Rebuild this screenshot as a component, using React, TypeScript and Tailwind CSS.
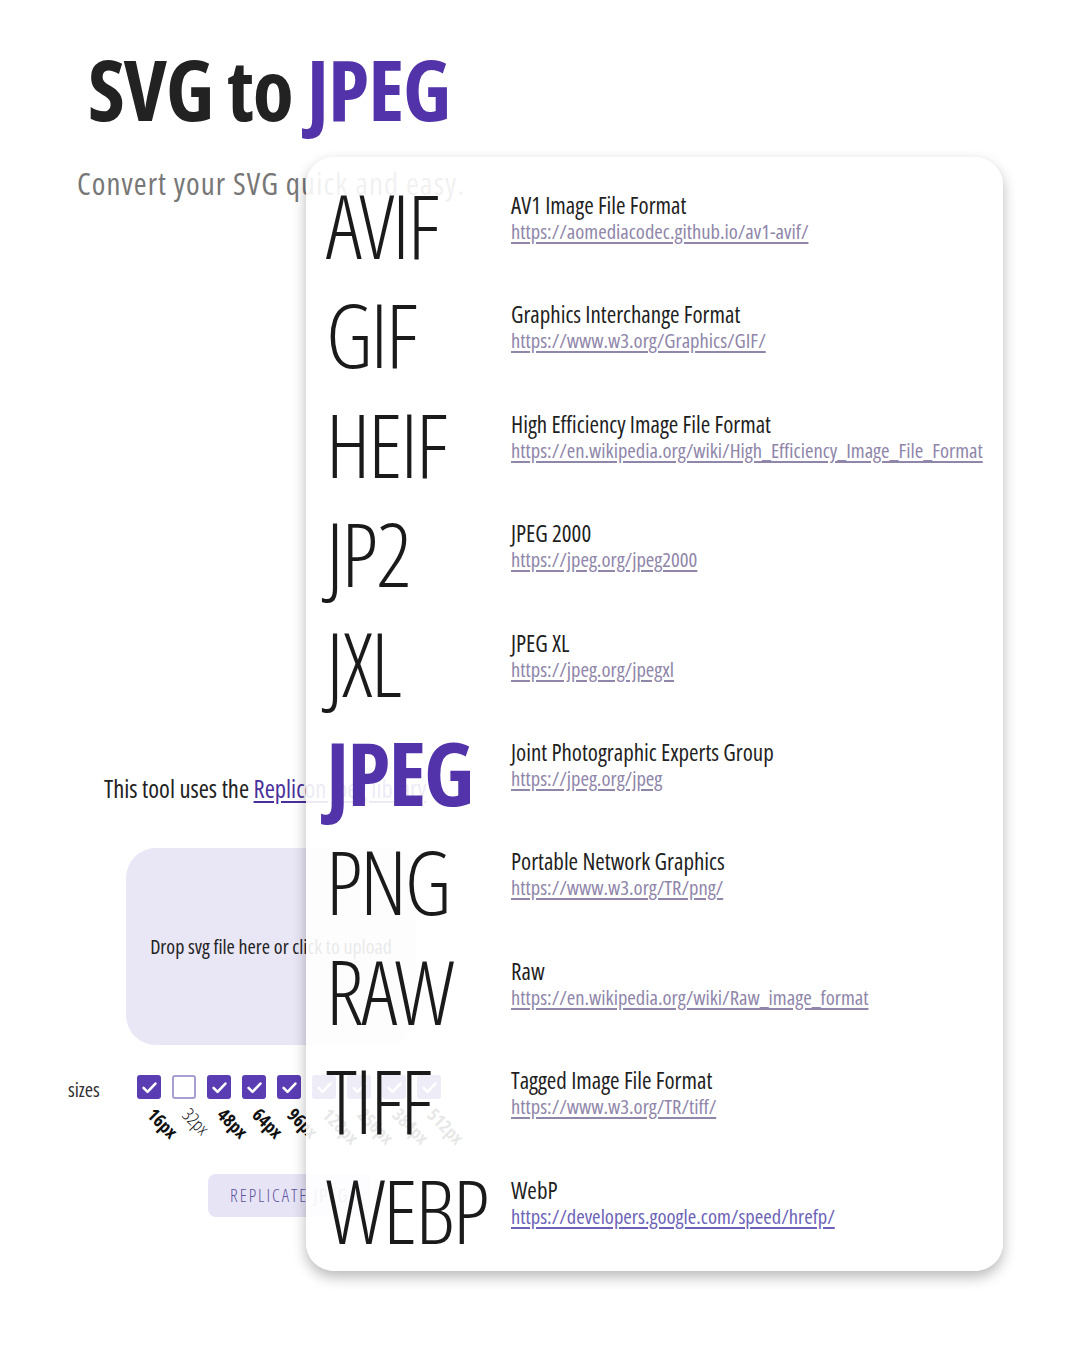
import React from 'react'

const formats = [
  { key: 'AVIF', name: 'AV1 Image File Format', url: 'https://aomediacodec.github.io/av1-avif/' },
  { key: 'GIF', name: 'Graphics Interchange Format', url: 'https://www.w3.org/Graphics/GIF/' },
  { key: 'HEIF', name: 'High Efficiency Image File Format', url: 'https://en.wikipedia.org/wiki/High_Efficiency_Image_File_Format' },
  { key: 'JP2', name: 'JPEG 2000', url: 'https://jpeg.org/jpeg2000' },
  { key: 'JXL', name: 'JPEG XL', url: 'https://jpeg.org/jpegxl' },
  { key: 'JPEG', name: 'Joint Photographic Experts Group', url: 'https://jpeg.org/jpeg', active: true },
  { key: 'PNG', name: 'Portable Network Graphics', url: 'https://www.w3.org/TR/png/' },
  { key: 'RAW', name: 'Raw', url: 'https://en.wikipedia.org/wiki/Raw_image_format' },
  { key: 'TIFF', name: 'Tagged Image File Format', url: 'https://www.w3.org/TR/tiff/' },
  { key: 'WEBP', name: 'WebP', url: 'https://developers.google.com/speed/hrefp/', fresh: true },
]

const sizes = [
  { px: 16, on: true },
  { px: 32, on: false },
  { px: 48, on: true },
  { px: 64, on: true },
  { px: 96, on: true },
  { px: 128, on: true },
  { px: 256, on: true },
  { px: 384, on: true },
  { px: 512, on: true },
]

function Check() {
  return (
    <svg viewBox="0 0 24 24" className="h-[19px] w-[19px]" fill="none" stroke="white" strokeWidth="3.2" strokeLinecap="round" strokeLinejoin="round">
      <path d="M4.5 12.5l5 5L19.5 7" />
    </svg>
  )
}

function SizePicker() {
  return (
    <div className="mt-[30px] flex items-start">
      <span className="ml-[68px] mt-[3px] w-[69px] text-[20px] leading-[24px] text-[#333]">sizes</span>
      <div className="flex gap-[11px]">
        {sizes.map((s) => (
          <div key={s.px} className="flex w-[24px] flex-col items-start">
            {s.on ? (
              <div className="flex h-[24px] w-[24px] items-center justify-center rounded-[3px] bg-[#5a3db3]">
                <Check />
              </div>
            ) : (
              <div className="h-[24px] w-[24px] rounded-[3px] border-2 border-[#a99ed2] bg-white" />
            )}
            <span
              className={
                'ml-[21px] mt-[5px] inline-block w-max origin-top-left rotate-45 text-[18px] leading-[20px] text-[#111] ' +
                (s.on ? 'font-bold' : 'font-light')
              }
            >
              {s.px}px
            </span>
          </div>
        ))}
      </div>
    </div>
  )
}

function FormatPanel() {
  return (
    <div className="absolute left-[306px] top-[157px] h-[1114px] w-[697px] rounded-[28px] bg-white/90 pt-[14px] shadow-[0_6px_14px_rgba(0,0,0,0.28)]">
      {formats.map((f) => (
        <div key={f.key} className="flex h-[109.4px] items-start pl-[20px]">
          <div
            className={
              'w-[185px] text-[88px] leading-[109.4px] tracking-[-2px] ' +
              (f.active ? 'font-bold text-[#5233a9]' : 'font-light text-[#1a1a1a]')
            }
          >
            {f.key}
          </div>
          <div className="pt-[20px]">
            <div className="text-[23px] leading-[28px] text-[#1f1f1f]">{f.name}</div>
            <a
              href="#"
              className={
                'block text-[20.6px] leading-[24px] underline underline-offset-[3px] ' +
                (f.fresh ? 'text-[#6c63b8]' : 'text-[#8f86aa]')
              }
            >
              {f.url}
            </a>
          </div>
        </div>
      ))}
    </div>
  )
}

export default function App() {
  return (
    <div className="relative min-h-[1350px] w-[1069px] bg-white font-['Open_Sans',sans-serif] font-stretch-condensed">
      <h1 className="ml-[88px] pt-[47px] text-[84px] font-bold leading-[84px] tracking-[-1px] text-[#222]">
        SVG to <span className="text-[#5233a9]">JPEG</span>
      </h1>
      <p className="ml-[77px] mt-[36px] text-[31px] leading-[32px] tracking-[1.05px] text-[#777]">
        Convert your SVG quick and easy.
      </p>

      <div className="h-[572px]" />

      <p className="ml-[104px] mt-[3px] text-[24.5px] leading-[30px] text-[#222]">
        This tool uses the{' '}
        <a href="#" className="text-[#4a2f9c] underline underline-offset-[3px]">
          Replicon jpeg library
        </a>
      </p>

      <div className="ml-[126px] mt-[44px] flex h-[197px] w-[290px] items-center justify-center rounded-[30px] bg-[#e9e6f6]">
        <span className="text-[20px] text-[#222]">Drop svg file here or click to upload</span>
      </div>

      <SizePicker />

      <button className="ml-[208px] mt-[50px] h-[43px] rounded-[8px] bg-[#e7e4f6] px-[22px] text-[18px] font-light uppercase tracking-[2px] text-[#5f55a0]">
        Replicate jpeg
      </button>

      <FormatPanel />
    </div>
  )
}
